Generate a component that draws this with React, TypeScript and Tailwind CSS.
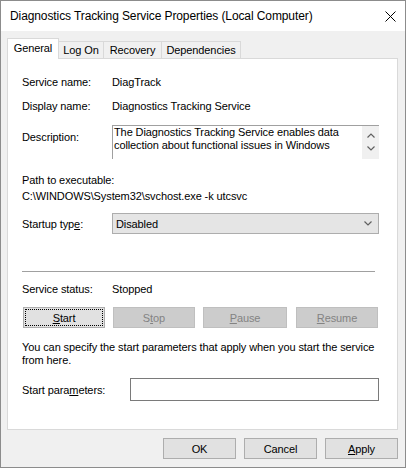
import React from "react";

const font = { fontFamily: '"Liberation Sans", Arial, sans-serif' };

function Chevron({ dir }: { dir: "up" | "down" }) {
  return (
    <svg width="8" height="5" viewBox="0 0 8 5" className="block">
      <polyline
        points={dir === "up" ? "0.5,4.5 4,1 7.5,4.5" : "0.5,0.5 4,4 7.5,0.5"}
        fill="none"
        stroke="#606060"
        strokeWidth="1.2"
      />
    </svg>
  );
}

function Btn({
  children,
  w,
  disabled,
  focused,
  className = "",
}: {
  children: React.ReactNode;
  w: string;
  disabled?: boolean;
  focused?: boolean;
  className?: string;
}) {
  return (
    <div
      className={
        "relative h-[21px] flex items-center justify-center border " +
        w +
        " " +
        (disabled
          ? "bg-[#cccccc] border-[#bfbfbf] text-[#838383] "
          : "bg-[#e1e1e1] border-[#adadad] text-black ") +
        className
      }
    >
      {focused && (
        <span className="absolute inset-[1px] border border-dotted border-black" />
      )}
      <span className="leading-[14px]">{children}</span>
    </div>
  );
}

export default function App() {
  return (
    <div
      style={font}
      className="w-[406px] h-[468px] bg-[#f0f0f0] border border-[#8c8c8c] flex flex-col text-[11px] text-black tracking-[-0.1px]"
    >
      {/* Title bar */}
      <div className="h-[30px] bg-white flex items-center justify-between pl-[9px] pr-[9px] shrink-0">
        <span className="text-[12px] tracking-[-0.1px] leading-[16px]">
          Diagnostics Tracking Service Properties (Local Computer)
        </span>
        <svg width="11" height="11" viewBox="0 0 11 11" className="block">
          <line x1="0.5" y1="0.5" x2="10.5" y2="10.5" stroke="#000" strokeWidth="1" />
          <line x1="10.5" y1="0.5" x2="0.5" y2="10.5" stroke="#000" strokeWidth="1" />
        </svg>
      </div>

      {/* Tabs */}
      <div className="mt-[7px] h-[20px] flex items-end pl-[6px] shrink-0">
        <div className="relative z-10 -mb-[1px] h-[21px] w-[52px] bg-white border-l border-t border-r border-[#d9d9d9] flex items-start justify-center pt-[2px]">
          <span className="leading-[14px]">General</span>
        </div>
        <div className="h-[17px] w-[45px] bg-[#f0f0f0] border-t border-r border-[#d9d9d9] flex items-center justify-center">
          <span className="leading-[14px]">Log On</span>
        </div>
        <div className="h-[17px] w-[58px] bg-[#f0f0f0] border-t border-r border-[#d9d9d9] flex items-center justify-center">
          <span className="leading-[14px]">Recovery</span>
        </div>
        <div className="h-[17px] w-[79px] bg-[#f0f0f0] border-t border-r border-[#d9d9d9] flex items-center justify-center">
          <span className="leading-[14px]">Dependencies</span>
        </div>
      </div>

      {/* Panel */}
      <div className="ml-[6px] w-[391px] h-[372px] bg-white border border-[#d9d9d9] flex flex-col pl-[14px] shrink-0">
        <div className="mt-[15px] h-[16px] leading-[16px] flex">
          <span className="w-[90px]">Service name:</span>
          <span>DiagTrack</span>
        </div>
        <div className="mt-[8px] h-[16px] leading-[16px] flex">
          <span className="w-[90px]">Display name:</span>
          <span>Diagnostics Tracking Service</span>
        </div>

        <div className="mt-[11px] h-[34px] flex">
          <span className="w-[90px] pt-[4px] leading-[16px]">Description:</span>
          <div className="w-[267px] h-[34px] border-t border-l border-[#a0a0a0] flex">
            <div className="flex-1 pl-[1px] leading-[13px]">
              The Diagnostics Tracking Service enables data
              <br />
              collection about functional issues in Windows
            </div>
            <div className="w-[17px] bg-[#f0f0f0] flex flex-col items-center pt-[7px] gap-[8px]">
              <Chevron dir="up" />
              <Chevron dir="down" />
            </div>
          </div>
        </div>

        <div className="mt-[13px] h-[16px] leading-[16px]">Path to executable:</div>
        <div className="h-[16px] leading-[16px]">C:\WINDOWS\System32\svchost.exe -k utcsvc</div>

        <div className="mt-[9px] h-[21px] flex items-center">
          <span className="w-[90px] leading-[16px]">
            Startup typ<u>e</u>:
          </span>
          <div className="w-[267px] h-[21px] bg-[#e5e5e5] border border-[#adadad] flex items-center justify-between pl-[3px] pr-[6px]">
            <span className="leading-[14px]">Disabled</span>
            <Chevron dir="down" />
          </div>
        </div>

        <div className="mt-[37px] ml-[0px] w-[353px] h-[1px] bg-[#a0a0a0]" />

        <div className="mt-[9px] h-[16px] leading-[16px] flex">
          <span className="w-[90px]">Service status:</span>
          <span>Stopped</span>
        </div>

        <div className="mt-[10px] flex pl-[1px]">
          <Btn w="w-[82px]" focused>
            <u>S</u>tart
          </Btn>
          <Btn w="w-[82px]" disabled className="ml-[8px]">
            S<u>t</u>op
          </Btn>
          <Btn w="w-[84px]" disabled className="ml-[8px]">
            <u>P</u>ause
          </Btn>
          <Btn w="w-[82px]" disabled className="ml-[9px]">
            <u>R</u>esume
          </Btn>
        </div>

        <div className="mt-[13px] leading-[13px] whitespace-nowrap">
          You can specify the start parameters that apply when you start the service
          <br />
          from here.
        </div>

        <div className="mt-[11px] h-[23px] flex items-center">
          <span className="w-[108px] leading-[16px]">
            Start para<u>m</u>eters:
          </span>
          <div className="w-[249px] h-[23px] bg-white border border-[#7a7a7a]" />
        </div>
      </div>

      {/* Bottom buttons */}
      <div className="mt-[8px] flex justify-end gap-[8px] pr-[7px]">
        <Btn w="w-[73px]">OK</Btn>
        <Btn w="w-[73px]">Cancel</Btn>
        <Btn w="w-[73px]">
          <u>A</u>pply
        </Btn>
      </div>
    </div>
  );
}
